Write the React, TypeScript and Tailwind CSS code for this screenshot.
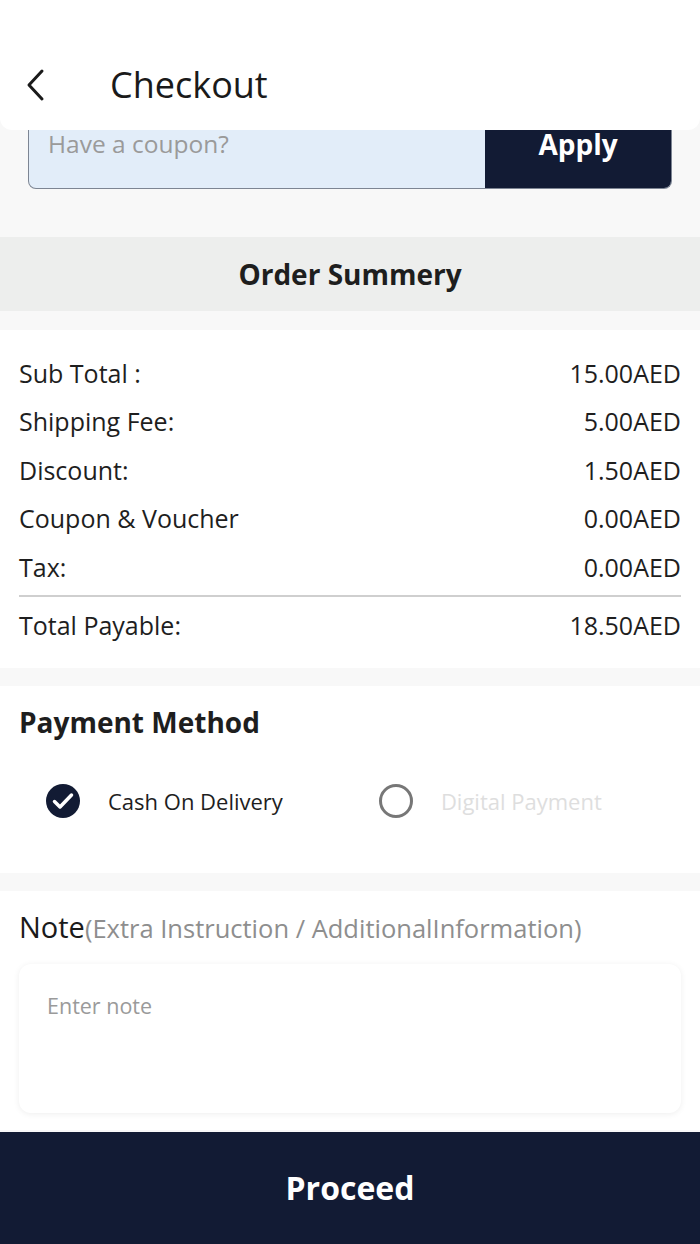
import React from "react";

const Row = ({ label, value }: { label: string; value: string }) => (
  <div className="flex h-[48.5px] items-center justify-between text-[25px] text-[#1e1e1e]">
    <span>{label}</span>
    <span>{value}</span>
  </div>
);

export default function App() {
  return (
    <div className="relative flex h-[1244px] w-[700px] flex-col overflow-hidden bg-[#f8f8f8] font-['Open_Sans',sans-serif]">
      {/* Header overlay */}
      <div className="absolute left-0 right-0 top-0 z-10 flex h-[130px] items-center rounded-b-[12px] bg-white pt-[40px]">
        <svg className="ml-[25px]" width="22" height="34" viewBox="0 0 22 34" fill="none">
          <path d="M17 3 L4 17 L17 31" stroke="#1a1a1a" strokeWidth="3" strokeLinecap="round" strokeLinejoin="round" />
        </svg>
        <span className="ml-[63px] text-[36px] text-[#1a1a1a]">Checkout</span>
      </div>

      {/* Scroll content */}
      <div className="flex flex-1 flex-col pt-[101px]">
        <div className="mx-[28px] flex h-[88px] overflow-hidden rounded-b-[8px] border border-t-0 border-[#7d8593] bg-[#e2edf9]">
          <div className="flex flex-1 items-start pl-[19px] pt-[25px] text-[24.5px] leading-[36px] text-[#9a9a9a]">Have a coupon?</div>
          <div className="flex w-[186px] items-start justify-center bg-[#121b34] pt-[24px] text-[28px] font-bold leading-[38px] text-white">Apply</div>
        </div>

        <div className="mt-[48px] flex h-[74px] items-center justify-center bg-[#edeeed] text-[28px] font-bold text-[#1e1e1e]">
          Order Summery
        </div>

        <div className="mt-[19px] flex h-[338px] flex-col bg-white px-[19px] pt-[19px]">
          <Row label="Sub Total :" value="15.00AED" />
          <Row label="Shipping Fee:" value="5.00AED" />
          <Row label="Discount:" value="1.50AED" />
          <Row label="Coupon & Voucher" value="0.00AED" />
          <Row label="Tax:" value="0.00AED" />
          <div className="mt-[3px] h-[2px] bg-[#cfcfcf]" />
          <div className="mt-[4.5px]">
            <Row label="Total Payable:" value="18.50AED" />
          </div>
        </div>

        <div className="mt-[18px] flex h-[187px] flex-col bg-white px-[19px]">
          <div className="mt-[16px] text-[28px] font-bold leading-[40px] text-[#1e1e1e]">Payment Method</div>
          <div className="mt-[37px] flex h-[44px] items-center">
            <div className="ml-[27px] flex h-[34px] w-[34px] items-center justify-center rounded-full bg-[#121b34]">
              <svg width="34" height="34" viewBox="0 0 34 34" fill="none">
                <path d="M8.5 17.5 L14 23 L25.5 11" stroke="white" strokeWidth="3.5" strokeLinecap="round" strokeLinejoin="round" />
              </svg>
            </div>
            <span className="ml-[28px] text-[22px] text-[#1e1e1e]">Cash On Delivery</span>
            <div className="ml-[96px] h-[34px] w-[34px] rounded-full border-[3px] border-[#777777]" />
            <span className="ml-[28px] text-[22px] text-[#dedede]">Digital Payment</span>
          </div>
        </div>

        <div className="mt-[18px] flex h-[239px] flex-col bg-white px-[19px]">
          <div className="mt-[16px] flex items-baseline leading-[40px]">
            <span className="text-[29px] text-[#1a1a1a]">Note</span>
            <span className="text-[25.5px] text-[#8e8e8e]">(Extra Instruction / AdditionalInformation)</span>
          </div>
          <div className="mt-[16px] h-[149px] rounded-[12px] bg-white px-[28px] pt-[26px] text-[21.5px] text-[#9a9a9a] shadow-[0_1px_6px_rgba(0,0,0,0.07)]">
            Enter note
          </div>
        </div>

        <div className="mt-auto flex h-[112px] items-center justify-center bg-[#121b34] text-[32px] font-bold text-white">
          Proceed
        </div>
      </div>
    </div>
  );
}
